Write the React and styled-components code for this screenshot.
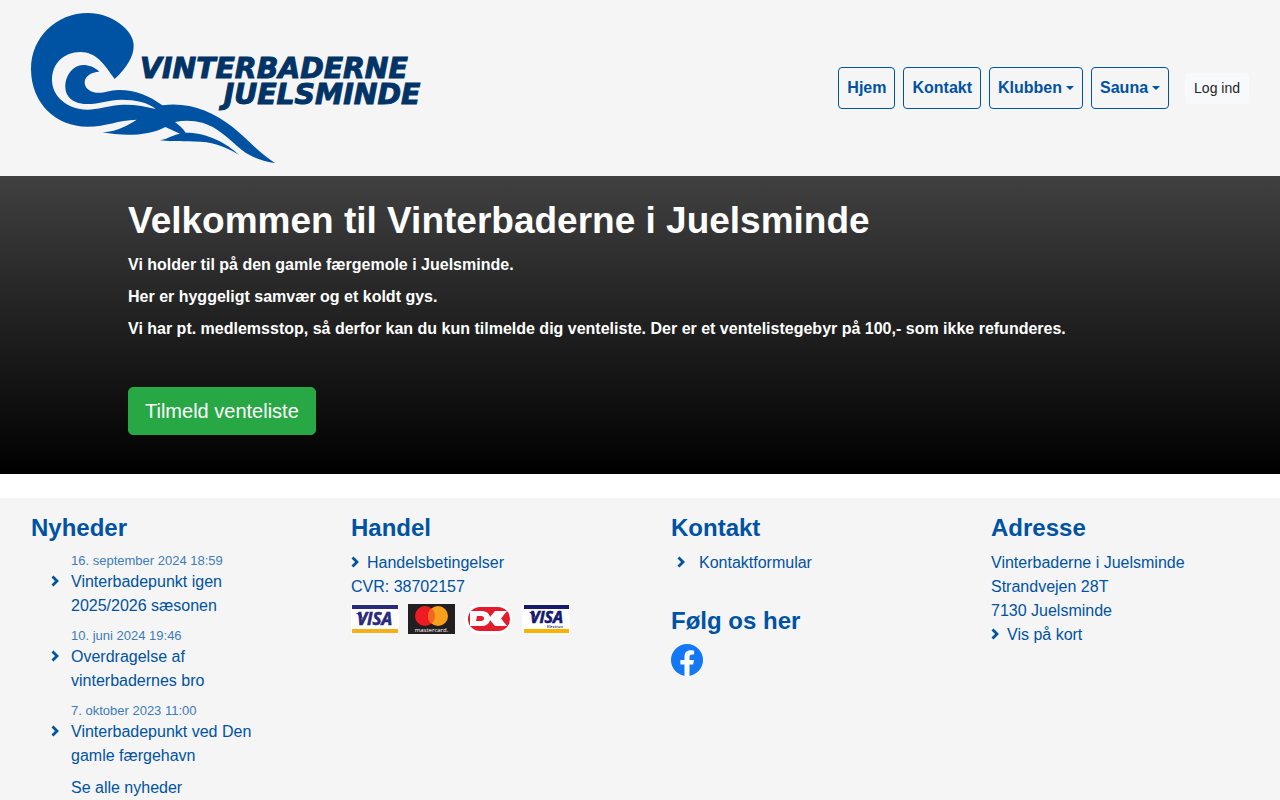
import styled, { createGlobalStyle } from "styled-components";

const GlobalStyle = createGlobalStyle`
  * {
    box-sizing: border-box;
  }
  body {
    margin: 0;
    background: #fff;
    color: #0052a3;
    font-family: "Liberation Sans", Arial, sans-serif;
    font-size: 16px;
    line-height: 24px;
  }
`;

const Header = styled.header`
  display: flex;
  align-items: center;
  justify-content: space-between;
  padding: 13px 31px;
  background: #f5f5f5;
`;

const LogoLink = styled.a`
  display: block;
`;

const LogoSvg = styled.svg`
  display: block;
  width: 390px;
  height: 150px;
`;

const LogoText = styled.text`
  font-family: "DejaVu Sans", sans-serif;
  font-size: 85px;
  font-weight: 700;
  font-style: italic;
  fill: #003366;
  stroke: #003366;
  stroke-width: 3px;
`;

const Nav = styled.nav`
  display: flex;
  align-items: center;
  gap: 8px;
`;

const NavLink = styled.a`
  padding: 8px;
  border: 1px solid #0052a3;
  border-radius: 4px;
  color: #0052a3;
  font-weight: 700;
  text-decoration: none;
`;

const NavToggle = styled.button`
  display: flex;
  align-items: center;
  gap: 4px;
  padding: 8px;
  border: 1px solid #0052a3;
  border-radius: 4px;
  background: none;
  color: #0052a3;
  font: inherit;
  font-weight: 700;
  cursor: pointer;

  &::after {
    content: "";
    border-top: 4px solid;
    border-right: 4px solid transparent;
    border-left: 4px solid transparent;
    border-bottom: 0;
  }
`;

const LoginButton = styled.button`
  margin-left: 8px;
  padding: 4px 8px;
  border: 1px solid #f8f9fa;
  border-radius: 3px;
  background: #f8f9fa;
  color: #212529;
  font: inherit;
  font-size: 14px;
  line-height: 21px;
  cursor: pointer;
`;

const Hero = styled.section`
  padding: 21px 10% 39px;
  background: linear-gradient(#404040, #000);
  color: #fff;
  font-weight: 700;
`;

const HeroTitle = styled.h1`
  margin: 0 0 8px;
  font-size: 37px;
  line-height: 48px;
`;

const HeroText = styled.p`
  margin: 0 0 8px;
`;

const SignupButton = styled.button`
  display: block;
  margin-top: 46px;
  padding: 8px 16px;
  border: 1px solid #28a745;
  border-radius: 5px;
  background: #28a745;
  color: #fff;
  font: inherit;
  font-size: 20px;
  font-weight: 400;
  line-height: 30px;
  cursor: pointer;
`;

const Footer = styled.footer`
  display: grid;
  grid-template-columns: repeat(4, 1fr);
  margin-top: 24px;
  padding: 16px 0;
  background: #f5f5f5;
`;

const Column = styled.section`
  padding: 0 31px;
`;

const Heading = styled.h2`
  margin: 0 0 9px;
  font-size: 24px;
  line-height: 28px;
`;

const Link = styled.a`
  color: #0052a3;
  text-decoration: none;
`;

const List = styled.ul`
  margin: 0;
  padding: 0 0 0 40px;
  list-style: none;
`;

const NewsItem = styled.li`
  margin-bottom: 8px;
`;

const NewsDate = styled.time`
  display: block;
  color: #3e7cb9;
  font-size: 13px;
  line-height: 19px;
`;

const NewsLink = styled(Link)`
  display: flex;
  gap: 12px;
  margin-left: -20px;
`;

const IconLink = styled(Link)`
  display: flex;
  gap: ${(props) => props.$gap || "8px"};
  padding-left: ${(props) => props.$indent || "0"};
`;

const ChevronSvg = styled.svg`
  flex: none;
  width: 8px;
  height: 12px;
  margin-top: 5px;
`;

const Cards = styled.div`
  display: flex;
  gap: 9px;
  margin-top: 5px;
`;

const CardSvg = styled.svg`
  flex: none;
  width: 48px;
  height: 30px;
`;

const CardText = styled.text`
  font-family: "Open Sans", "Liberation Sans", sans-serif;
  font-size: ${(props) => props.$size};
  font-weight: ${(props) => props.$weight || 700};
  font-style: ${(props) => (props.$upright ? "normal" : "italic")};
`;

const FollowHeading = styled(Heading)`
  margin-top: 32px;
`;

const SocialLink = styled.a`
  display: inline-block;

  svg {
    display: block;
    width: 32px;
    height: 32px;
  }
`;

const news = [
  { date: "16. september 2024 18:59", title: "Vinterbadepunkt igen 2025/2026 sæsonen" },
  { date: "10. juni 2024 19:46", title: "Overdragelse af vinterbadernes bro" },
  { date: "7. oktober 2023 11:00", title: "Vinterbadepunkt ved Den gamle færgehavn" },
];

const Logo = () => (
  <LogoSvg viewBox="33 39 1170 450" role="img" aria-label="Vinterbaderne Juelsminde">
    <path
      fill="#0052a3"
      d="M284 237C322 201 341 168 341 137C341 112 326 91 300 71C271 50 239 39 204 39C108 39 33 113 33 207C33 310 108 380 202 380C262 380 292 360 350 359C325 374 296 394 248 397C305 408 382 410 436 381L480 401C462 403 447 415 420 421C470 427 508 422 560 427C602 435 630 449 658 465C620 429 559 397 497 398C490 386 477 376 465 366C511 357 553 365 588 387C630 414 654 446 690 466C715 479 740 486 765 489C721 462 684 419 635 379C577 334 505 305 427 316C387 286 342 269 295 270C266 271 251 281 227 278C204 274 193 261 194 245C196 228 214 216 238 215C224 201 206 195 190 195C157 196 136 228 136 260C136 295 166 311 199 312C236 313 264 299 304 299C346 299 386 308 407 327C375 319 337 312 298 315C260 318 234 329 202 329C141 329 96 288 96 240C96 190 132 156 181 156C230 156 252 193 284 237Z"
    />
    <LogoText x="360" y="234">VINTERBADERNE</LogoText>
    <LogoText x="1201" y="312" textAnchor="end">JUELSMINDE</LogoText>
  </LogoSvg>
);

const Chevron = () => (
  <ChevronSvg viewBox="0 0 8 12" aria-hidden="true">
    <path d="M1.5 1.5L6 6L1.500 10.5" fill="none" stroke="#0052a3" strokeWidth="2.8" />
  </ChevronSvg>
);

const Visa = () => (
  <CardSvg viewBox="0 0 48 30" role="img" aria-label="Visa">
    <path fill="#fff" d="M0 0h48v30H0z" />
    <path fill="#29297d" d="M1 1h46v4H1zM5 9h5l2 6z" />
    <path fill="#faaf19" d="M1 25h46v4H1z" />
    <CardText $size="17px" x="6" y="21" fill="#29297d" stroke="#29297d" strokeWidth="0.6">VISA</CardText>
  </CardSvg>
);

const Mastercard = () => (
  <CardSvg viewBox="0 0 48 30" role="img" aria-label="Mastercard">
    <path fill="#231f20" d="M0 0h47v30H0z" />
    <circle cx="17" cy="12" r="10" fill="#ed1c24" />
    <circle cx="30" cy="12" r="10" fill="#f9a01b" />
    <path fill="#f26522" d="M23.5 4.4a10 10 0 0 1 0 15.2a10 10 0 0 1 0-15.2" />
    <CardText $size="6px" $weight="500" $upright x="23.5" y="28" fill="#fff" textAnchor="middle">mastercard.</CardText>
  </CardSvg>
);

const Dankort = () => (
  <CardSvg viewBox="0 0 48 30" role="img" aria-label="Dankort">
    <rect width="47" height="30" rx="15" fill="#fff" />
    <rect x="3" y="3" width="42" height="24" rx="12" fill="#e31b2b" />
    <path fill="#fff" d="M5 7h11c5 0 8 2 9 6l5-6h12l-6 7.500l6 7.500H30l-5-6c-1 4-4 6-9 6H5z" />
    <path fill="#e31b2b" d="M12 12h4c4 0 4 5 0 5h-5z" />
  </CardSvg>
);

const VisaElectron = () => (
  <CardSvg viewBox="0 0 48 30" role="img" aria-label="Visa Electron">
    <path fill="#fff" d="M0 0h48v30H0z" />
    <path fill="#15196f" d="M2 1h45v4H2zM7 8h5l2 6z" />
    <path fill="#f9b300" d="M2 25h45v4H2z" />
    <CardText $size="16px" x="8" y="19" fill="#15196f" stroke="#15196f" strokeWidth="0.6">VISA</CardText>
    <CardText $size="4px" $weight="600" $upright x="25" y="24" fill="#15196f">Electron</CardText>
  </CardSvg>
);

const App = () => {
  return (
    <>
      <GlobalStyle />
      <Header>
        <LogoLink href="#">
          <Logo />
        </LogoLink>
        <Nav>
          <NavLink href="#">Hjem</NavLink>
          <NavLink href="#kontakt">Kontakt</NavLink>
          <NavToggle>Klubben</NavToggle>
          <NavToggle>Sauna</NavToggle>
          <LoginButton>Log ind</LoginButton>
        </Nav>
      </Header>
      <Hero>
        <HeroTitle>Velkommen til Vinterbaderne i Juelsminde</HeroTitle>
        <HeroText>Vi holder til på den gamle færgemole i Juelsminde.</HeroText>
        <HeroText>Her er hyggeligt samvær og et koldt gys.</HeroText>
        <HeroText>
          Vi har pt. medlemsstop, så derfor kan du kun tilmelde dig venteliste. Der er et ventelistegebyr på 100,- som
          ikke refunderes.
        </HeroText>
        <SignupButton>Tilmeld venteliste</SignupButton>
      </Hero>
      <Footer>
        <Column>
          <Heading>Nyheder</Heading>
          <List>
            {news.map((item) => (
              <NewsItem key={item.date}>
                <NewsDate>{item.date}</NewsDate>
                <NewsLink href="#nyheder">
                  <Chevron />
                  <span>{item.title}</span>
                </NewsLink>
              </NewsItem>
            ))}
            <li>
              <Link href="#nyheder">Se alle nyheder</Link>
            </li>
          </List>
        </Column>
        <Column>
          <Heading>Handel</Heading>
          <IconLink href="#handel">
            <Chevron />
            Handelsbetingelser
          </IconLink>
          <div>CVR: 38702157</div>
          <Cards>
            <Visa />
            <Mastercard />
            <Dankort />
            <VisaElectron />
          </Cards>
        </Column>
        <Column id="kontakt">
          <Heading>Kontakt</Heading>
          <IconLink href="#kontakt" $indent="6px" $gap="14px">
            <Chevron />
            Kontaktformular
          </IconLink>
          <FollowHeading>Følg os her</FollowHeading>
          <SocialLink href="#facebook" aria-label="Facebook">
            <svg viewBox="0 0 32 32">
              <circle cx="16" cy="16" r="16" fill="#1478f5" />
              <path
                fill="#fff"
                d="M13.5 32V20.6H9.4V16h4.1v-3.5c0-4 2.4-6.3 6.1-6.3c1.8 0 3.5.3 3.5.3v4h-2c-2 0-2.6 1.2-2.6 2.5v3h4.4l-.7 4.6h-3.7V32z"
              />
            </svg>
          </SocialLink>
        </Column>
        <Column>
          <Heading>Adresse</Heading>
          <div>Vinterbaderne i Juelsminde</div>
          <div>Strandvejen 28T</div>
          <div>7130 Juelsminde</div>
          <IconLink href="#kort">
            <Chevron />
            Vis på kort
          </IconLink>
        </Column>
      </Footer>
    </>
  );
};

export default App;
